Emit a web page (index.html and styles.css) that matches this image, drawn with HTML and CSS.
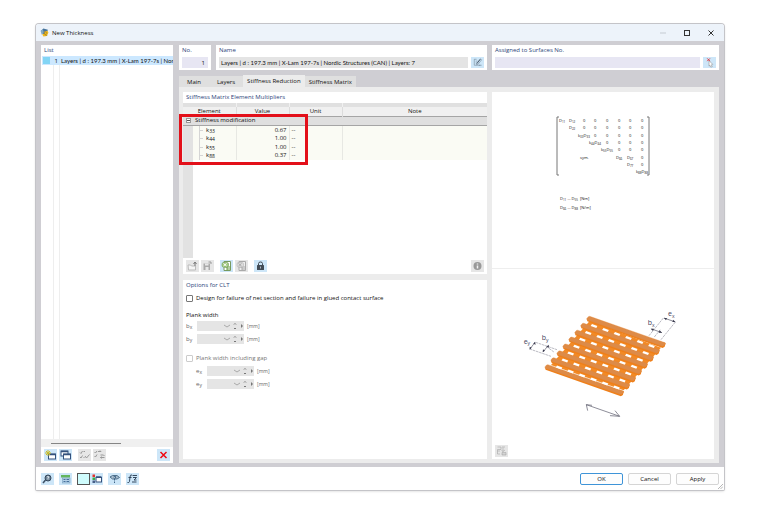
FILE: index.html
```html
<!DOCTYPE html>
<html lang="en">
<head>
<meta charset="utf-8">
<title>New Thickness</title>
<link rel="stylesheet" href="styles.css">
</head>
<body>
<div class="window">
  <header class="titlebar">
    <svg class="app-icon" viewBox="0 0 16 16"><path d="M2 5 6 1l8 2-2 6-7 2z" fill="#46739b"/><path d="M1 5l4-3 2 6-4 4z" fill="#83a9c4"/><path d="M8 6l5-1 2 3-3 6-6 1-2-4 3-1z" fill="#f1b91d"/><path d="M7 7l2 5 4 1M10 6l2 4" stroke="#70652e" fill="none"/></svg>
    <h1>New Thickness</h1>
    <div class="window-controls">
      <button class="plain" aria-label="Minimize" disabled><svg viewBox="0 0 8 8"><path d="M1 4h6" stroke="#c5cbd2"/></svg></button>
      <button class="plain" aria-label="Maximize"><svg viewBox="0 0 8 8"><rect x="1.500" y="1.500" width="5" height="5" fill="none" stroke="#333"/></svg></button>
      <button class="plain" aria-label="Close"><svg viewBox="0 0 8 8"><path d="M1.500 1.500l5 5M6.500 1.500l-5 5" stroke="#333"/></svg></button>
    </div>
  </header>

  <div class="content">
    <aside class="panel list">
      <h2>List</h2>
      <div class="list-body">
        <div class="list-row"><span class="swatch"></span><span class="row-no">1</span><span class="row-name">Layers | d : 197.3 mm | X-Lam 197-7s | Nordic Structures (CAN) | Layers: 7</span></div>
      </div>
      <div class="scroll"><div class="thumb"></div></div>
      <div class="tools">
        <button class="tool" aria-label="New"><svg viewBox="0 0 26 24"><rect x="9" y="10" width="14" height="10" fill="#fff" stroke="#34517c" stroke-width="2"/><path d="M9 11h14" stroke="#34517c" stroke-width="3"/><path d="M8 2v12M2 8h12M4 4l8 8M12 4l-8 8" stroke="#c9bd2c" stroke-width="2"/></svg></button>
        <button class="tool" aria-label="Copy"><svg viewBox="0 0 26 24"><g fill="#fff" stroke="#34517c" stroke-width="2"><rect x="4" y="4" width="14" height="10"/><rect x="9" y="10" width="14" height="10"/></g><path d="M4 5h14M9 11h14" stroke="#34517c" stroke-width="3"/></svg></button>
        <button class="tool off spaced" aria-label="Select all" disabled><svg viewBox="0 0 26 24"><path d="M4 7l2 2 3-5M4 16l2 2 3-5M11 5h3M11 17h2M14 14l3 4 6-7" fill="none" stroke="#999" stroke-width="2"/></svg></button>
        <button class="tool off" aria-label="Invert selection" disabled><svg viewBox="0 0 26 24"><path d="M3 6l2 2 3-4M3 14l2 2 3-5M10 5h6l-2-2M23 17h-8l2-2M15 17l2 2M15 12h6l2 2" fill="none" stroke="#999" stroke-width="2"/></svg></button>
        <button class="tool last" aria-label="Delete"><svg viewBox="0 0 26 24"><path d="M7 6l12 12M19 6L7 18" stroke="#f00812" stroke-width="3"/></svg></button>
      </div>
    </aside>

    <main class="main">
      <div class="top">
        <div class="left-top">
          <div class="panel field no"><label for="no">No.</label><input id="no" value="1"></div>
          <div class="panel field name"><label for="name">Name</label>
            <div class="field-line"><input id="name" value="Layers | d : 197.3 mm | X-Lam 197-7s | Nordic Structures (CAN) | Layers: 7" readonly>
            <button class="tool" aria-label="Edit name"><svg viewBox="0 0 26 24"><path d="M11 5H6v13h13M9 9h4M9 13h3M19 4l-7 9-1 4 4-2 7-9zM16 18h6" fill="none" stroke="#5d6e7f" stroke-width="1"/><path d="M19 5l-7 9" stroke="#46586b" stroke-width="2"/></svg></button></div></div>
        </div>
        <div class="panel field assigned"><label for="surfaces">Assigned to Surfaces No.</label>
          <div class="field-line"><input id="surfaces"><button class="tool" aria-label="Select surfaces"><svg viewBox="0 0 26 24"><path d="M12 8l8 8-3 1 2 4-3 1-2-4-2 2z" fill="#fff" stroke="#777"/><path d="M8 3l6 6M14 3L8 9" stroke="#e3343b" stroke-width="2"/></svg></button></div></div>
      </div>

      <div class="tabs" role="tablist">
        <button role="tab">Main</button><button role="tab">Layers</button><button role="tab" class="active" aria-selected="true">Stiffness Reduction</button><button role="tab">Stiffness Matrix</button>
      </div>

      <div class="tab-body">
        <div class="left-col">
          <section class="panel multipliers">
            <h2>Stiffness Matrix Element Multipliers</h2>
            <div class="table-area">
              <table>
                <colgroup><col class="c-head"><col class="c-element"><col class="c-value"><col class="c-unit"><col></colgroup>
                <thead>
                  <tr class="strip"><td colspan="2"></td><td></td><td></td><td></td></tr>
                  <tr><th colspan="2">Element</th><th>Value</th><th>Unit</th><th>Note</th></tr>
                </thead>
                <tbody>
                  <tr class="group"><td><svg viewBox="0 0 10 7"><rect x="3.500" y="1.500" width="4" height="4" fill="#fff" stroke="#999"/><path d="M4 3.500h3" stroke="#555"/></svg></td><td colspan="4">Stiffness modification</td></tr>
                  <tr><td></td><td class="el">k<sub>33</sub></td><td class="val">0.67</td><td>--</td><td></td></tr>
                  <tr><td></td><td class="el">k<sub>44</sub></td><td class="val">1.00</td><td>--</td><td></td></tr>
                  <tr><td></td><td class="el">k<sub>55</sub></td><td class="val">1.00</td><td>--</td><td></td></tr>
                  <tr><td></td><td class="el">k<sub>88</sub></td><td class="val">0.37</td><td>--</td><td></td></tr>
                </tbody>
              </table>
              <div class="highlight"></div>
            </div>
            <div class="tools">
              <button class="tool off" aria-label="Open" disabled><svg viewBox="0 0 26 24"><path d="M4 10h5l2 2h8v8H5z" fill="#f5f5f5" stroke="#bbb" stroke-width="2"/><path d="M18 12V5M15 8l3-4 3 4" fill="none" stroke="#777" stroke-width="2"/></svg></button>
              <button class="tool off" aria-label="Save" disabled><svg viewBox="0 0 26 24"><path d="M5 7h13v13H5z" fill="#aaa"/><path d="M8 7h7v4H8zM9 14h6v6H9z" fill="#e8e8e8"/><path d="M15 4h5v4" fill="none" stroke="#999" stroke-width="2"/></svg></button>
              <button class="tool spaced" aria-label="Export table"><svg viewBox="0 0 26 24"><path d="M8 3h13v18H8z" fill="#fff" stroke="#789a62" stroke-width="2"/><path d="M9 14h12M14 14v7M14 18h7" stroke="#6c9e4a" stroke-width="2"/><rect x="4" y="5" width="13" height="9" rx="3" fill="#a4cb85" stroke="#5c9140"/><path d="M7 7l6 5M13 7l-6 5" stroke="#fff" stroke-width="2"/></svg></button>
              <button class="tool off" aria-label="Import table" disabled><svg viewBox="0 0 26 24"><path d="M8 3h13v18H8z" fill="#eee" stroke="#aaa" stroke-width="2"/><path d="M9 14h12M14 14v7M14 18h7" stroke="#aaa" stroke-width="2"/><rect x="4" y="5" width="13" height="9" rx="3" fill="#ddd" stroke="#aaa"/><path d="M7 7l6 5M13 7l-6 5" stroke="#aaa" stroke-width="2"/></svg></button>
              <button class="tool spaced" aria-label="Lock"><svg viewBox="0 0 26 24"><rect x="6" y="10" width="14" height="10" rx="1" fill="#424c56"/><path d="M9 11V7q0-3 4-3t4 3v4" fill="none" stroke="#424c56" stroke-width="2"/><path d="M13 13v4" stroke="#aebbc7" stroke-width="2"/></svg></button>
              <button class="tool off last" aria-label="Information" disabled><svg viewBox="0 0 26 24"><circle cx="13" cy="12" r="8" fill="#999"/><path d="M13 11v6M13 7v2" stroke="#f2f2f2" stroke-width="3"/></svg></button>
            </div>
          </section>

          <section class="panel options">
            <h2>Options for CLT</h2>
            <div class="check"><input type="checkbox" id="design"><label for="design">Design for failure of net section and failure in glued contact surface</label></div>
            <h3>Plank width</h3>
            <div class="spin"><label for="bx">b<sub>x</sub></label><span class="spin-box"><input id="bx" disabled><svg viewBox="0 0 24 10"><path d="M5 4l3 2 3-2" class="ghost"/><path d="M15 3.500l1-1 1 1M15 7l1 1 1-1" class="dark"/><path d="M22 3v4l2-2z" class="tri"/></svg></span><span class="unit">[mm]</span></div>
            <div class="spin"><label for="by">b<sub>y</sub></label><span class="spin-box"><input id="by" disabled><svg viewBox="0 0 24 10"><path d="M5 4l3 2 3-2" class="ghost"/><path d="M15 3.500l1-1 1 1M15 7l1 1 1-1" class="dark"/><path d="M22 3v4l2-2z" class="tri"/></svg></span><span class="unit">[mm]</span></div>
            <div class="check muted"><input type="checkbox" id="gap" disabled><label for="gap">Plank width including gap</label></div>
            <div class="spin inset"><label for="ex">e<sub>x</sub></label><span class="spin-box"><input id="ex" disabled><svg viewBox="0 0 24 10"><path d="M5 4l3 2 3-2" class="ghost"/><path d="M15 3.500l1-1 1 1M15 7l1 1 1-1" class="dark"/><path d="M22 3v4l2-2z" class="tri"/></svg></span><span class="unit">[mm]</span></div>
            <div class="spin inset"><label for="ey">e<sub>y</sub></label><span class="spin-box"><input id="ey" disabled><svg viewBox="0 0 24 10"><path d="M5 4l3 2 3-2" class="ghost"/><path d="M15 3.500l1-1 1 1M15 7l1 1 1-1" class="dark"/><path d="M22 3v4l2-2z" class="tri"/></svg></span><span class="unit">[mm]</span></div>
          </section>
        </div>

        <section class="panel preview">
          <svg class="matrix" viewBox="492 92 222 176">
            <path d="M559 117h-2v58h2M647 117h2v58h-2" fill="none" stroke="#777" stroke-width="1"/>
            <g id="cells"></g>
            <g class="units">
              <text x="560" y="200">D<tspan class="s" dy="1">11</tspan><tspan dy="-1"> ... D</tspan><tspan class="s" dy="1">55</tspan><tspan dy="-1">&#160; [Nm]</tspan></text>
              <text x="560" y="209">D<tspan class="s" dy="1">66</tspan><tspan dy="-1"> ... D</tspan><tspan class="s" dy="1">88</tspan><tspan dy="-1">&#160; [N/m]</tspan></text>
            </g>
          </svg>
          <svg class="planks" viewBox="492 269 222 172">
            <g transform="translate(515 300) scale(.3333)">
              <path d="M224 60L438 140 326 268 108 192z" fill="#f28a26"/>
              <g id="holes"></g>
              <g id="boards"></g>
              <g class="dims">
                <path d="M402 104L446 50M418 108L436 86M438 116L482 62" class="dash"/>
                <path d="M62 124L126 146M94 136L118 154M44 144L108 166" class="dash"/>
                <path d="M447 51l34 12M410 84l31 11M60 124l-15 20M99 134l-14 18"/>
                <path d="M447 51l9 0-3 7zM481 63l-9 0 3-7zM407 83l10 0-3 7zM441 95l-10 0 3-7zM60 122l2 9-7-3zM44 146l0-9 6 3zM101 131l1 9-7-3zM83 154l1-9 6 4z" class="head"/>
                <path d="M231 313l-17-2 4 18M214 311l100 35M285 344l29 2-14-17"/>
              </g>
              <g class="dim-text">
                <text x="398" y="72">b<tspan class="ds" dy="5">x</tspan></text>
                <text x="459" y="46">e<tspan class="ds" dy="5">x</tspan></text>
                <text x="80" y="118">b<tspan class="ds" dy="5">y</tspan></text>
                <text x="26" y="128">e<tspan class="ds" dy="5">y</tspan></text>
              </g>
            </g>
          </svg>
          <div class="tools"><button class="tool off" aria-label="Picture settings" disabled><svg viewBox="0 0 26 24"><path d="M5 4h7v5H5v9h5M5 12h5M14 4h6M16 5v8l-3-2M16 13l4-3M14 15h8v5h-8zM14 18h8" fill="none" stroke="#999" stroke-width="1"/></svg></button></div>
        </section>
      </div>
    </main>
  </div>

  <footer class="footer">
    <button class="tool" aria-label="Help"><svg viewBox="0 0 26 24"><path d="M9 14l-5 6" stroke="#3c5066" stroke-width="3"/><circle cx="14" cy="10" r="6" fill="#6f8496" stroke="#34475c" stroke-width="2"/><path d="M12 8q2-2 4 0l-2 3v2" fill="none" stroke="#dfeaf2" stroke-width="2"/></svg></button>
    <button class="tool" aria-label="Units"><svg viewBox="0 0 26 24"><path d="M4 4h18v5H4z" fill="#63b65f"/><rect x="7" y="10" width="15" height="10" fill="#b5d1e8" stroke="#6a94b5"/><path d="M9 13h4M15 13h5M9 17h4M15 17h5" stroke="#47709b" stroke-width="2"/></svg></button>
    <span class="pair"><button class="colour" aria-label="Colour"></button><button class="tool" aria-label="Display colours"><svg viewBox="0 0 26 24"><path d="M5 3h5v5H5z" fill="#e4322f"/><path d="M5 9h5v5H5z" fill="#3cad47"/><path d="M5 15h5v5H5z" fill="#465f88"/><rect x="12" y="9" width="11" height="9" fill="#fff" stroke="#34517c" stroke-width="2"/><path d="M12 8h11" stroke="#34517c" stroke-width="3"/></svg></button></span>
    <button class="tool" aria-label="View"><svg viewBox="0 0 26 24"><path d="M4 8l5-3h9l5 4-5 3H9z" fill="#a7bccd" stroke="#50718d" stroke-width="2"/><path d="M11 8q3-3 5 0l-3 4v3M13 17v3" fill="none" stroke="#3f6486" stroke-width="2"/></svg></button>
    <button class="tool" aria-label="Formula"><svg viewBox="0 0 26 24"><path d="M12 4q-4-1-4 4l-1 9q-1 3-4 2M5 9h6M13 5h9M14 9h7l-5 5h5M12 18h9" fill="none" stroke="#34495f" stroke-width="2"/></svg></button>
    <div class="actions"><button class="action ok">OK</button><button class="action">Cancel</button><button class="action">Apply</button></div>
    <svg class="grip" viewBox="0 0 6 6"><path d="M0 6l6-6M3 6l3-3" stroke="#aaa" stroke-width="1"/></svg>
  </footer>
</div>
<script src="drawing.js"></script>
</body>
</html>
```
FILE: styles.css
```css
* { box-sizing: border-box; }
body {
  margin: 0;
  min-height: 100vh;
  padding: 24px 36px 25px;
  display: flex;
  background: #fff;
  color: #111;
  font: 6px/8px "Open Sans", "Noto Sans", sans-serif;
}
button, input { font: inherit; color: inherit; margin: 0; padding: 0; border: 0; border-radius: 0; }
svg { display: block; }
h1, h2, h3 { margin: 0; font: inherit; }
sub { font-size: 5px; line-height: 0; vertical-align: -1px; }

.window {
  position: relative;
  flex: 1;
  display: flex;
  flex-direction: column;
  border-radius: 3px 3px 1px 1px;
  background: #fff;
  box-shadow: 0 0 0 1px #c4c4c8, 0 1px 3px #0003;
  overflow: hidden;
}
.titlebar { display: flex; align-items: center; height: 17px; padding: 0 9px 0 4px; background: #edf3fa; }
.titlebar h1 { padding-left: 3px; }
.app-icon { width: 9px; height: 9px; }
.window-controls { display: flex; margin-left: auto; gap: 16px; }
.plain { width: 8px; height: 8px; background: none; }
.plain svg { width: 8px; height: 8px; }

.content { flex: 1; display: flex; gap: 6px; padding: 4px 5px; background: #cfced3; }
.panel { background: #fff; }
h2, .field label { color: #2c4479; }

.list { flex: 0 0 132px; min-width: 0; display: flex; flex-direction: column; }
.list h2 { padding: 1px 3px 2px; }
.list-body { flex: 1; padding-left: 1px; background: linear-gradient(90deg, #fff 12px, #eee 12px 13px, #fff 13px 18px, #eee 18px 19px, #fff 19px); }
.list-row { display: flex; align-items: center; height: 9px; background: #cce8ff; white-space: nowrap; overflow: hidden; }
.swatch { flex: none; width: 7px; height: 7px; margin-left: 1px; background: #83d5f5; }
.row-no { flex: none; width: 8px; text-align: right; }
.row-name { padding-left: 3px; overflow: hidden; }
.row-name, #name { font-family: Lato, "Open Sans", sans-serif; }
.scroll { display: flex; align-items: center; height: 8px; padding: 0 10px; background: #f0f0f0; }
.thumb { width: 70px; height: 1px; background: #858585; }

.tools { display: flex; gap: 2px; padding: 2px 3px; }
.tool { flex: none; width: 13px; height: 12px; background: #cde6f8; }
.tool svg { width: 13px; height: 12px; }
.off { background: #e6e6e6; }
.spaced { margin-left: 4px; }
.last { margin-left: auto; }

.main { flex: 1; min-width: 0; display: flex; flex-direction: column; }
.top { display: grid; grid-template-columns: 308fr 227fr; gap: 5px; }
.left-top { display: flex; gap: 5px; min-width: 0; }
.field { display: flex; flex-direction: column; gap: 3px; min-width: 0; padding: 1px 3px 2px; }
.field input { flex: 1; width: 100%; min-width: 0; height: 11px; background: #e7e6f3; }
.no { width: 32px; }
.no input { flex: none; padding-right: 3px; text-align: right; }
.name { flex: 1; }
.field.name input { padding-left: 2px; background: #e4e4e4; }
.field-line { display: flex; gap: 3px; }
.field-line .tool { height: 11px; }
.field-line .tool svg { height: 11px; }

.tabs { display: flex; align-items: flex-end; height: 12px; margin-top: 5px; }
.tabs button { height: 11px; padding: 0 8px; background: #dfdfdf; }
.tabs .active { height: 12px; padding: 0 4px; background: #ececec; }
.tabs .active + button { padding: 0 4px; }

.tab-body { flex: 1; display: grid; grid-template-columns: 304fr 222fr; gap: 5px; padding: 5px 5px 4px 4px; background: #ececec; }
.left-col { display: flex; flex-direction: column; gap: 6px; min-width: 0; }
.multipliers { display: flex; flex-direction: column; }
.multipliers h2, .options h2 { padding: 1px 3px; }
.table-area { position: relative; height: 155px; background: linear-gradient(90deg, #e2e2e2 10px, #fff 10px); }
.multipliers h2 { padding-bottom: 2px; }
table { width: 100%; table-layout: fixed; border-collapse: collapse; background: #fafbf4; }
.c-head { width: 10px; }
.c-element { width: 43px; }
.c-value, .c-unit { width: 53px; }
td, th { height: 8px; padding: 0 2px; border-right: 1px solid #e7e8e3; line-height: 8px; font-weight: 400; }
tr > :last-child { border-right: 0; }
tbody tr:nth-child(odd) td { height: 9px; }
tbody td:first-child { padding: 0; background: #e2e2e2; border: 0; }
thead { background: #f0f0f0; }
thead .strip td { height: 4px; line-height: 3px; background: #e0e0e0; border-color: #f0f0f0; }
thead th { height: 9px; border-color: #dcdcdc; }
tbody .group td { background: #dfdfdf; border: solid #a5a5a5; border-width: 1px 0; line-height: 7px; }
.group svg { width: 10px; height: 7px; }
tbody .el { padding-left: 13px; background: linear-gradient(90deg, #d5d5d5 4px, #0000 4px) 6px 4px / 4px 1px no-repeat, linear-gradient(#d5d5d5, #d5d5d5) 6px 0 / 1px 100% no-repeat; }
.val { text-align: right; }
.highlight { position: absolute; left: -4px; top: 11px; width: 129px; height: 51px; border: 3px solid #e3101a; }

.options { flex: 1; }
.check { display: flex; align-items: center; gap: 3px; height: 8px; margin: 4px 4px 9px 3px; }
.check input { flex: none; appearance: none; width: 7px; height: 7px; border: 1px solid #777; border-radius: 1px; background: #fff; }
.muted { color: #777; margin-top: 10px; margin-bottom: 4px; }
.muted input { border-color: #ccc; }
.options h3 { padding: 0 3px; margin-bottom: 2px; }
.spin { display: flex; align-items: center; height: 10px; margin: 0 3px 3px; color: #666; }
.spin label { width: 11px; }
.unit { font-size: 5px; }
.inset { padding-left: 10px; }
.spin-box { display: flex; width: 47px; height: 10px; margin-right: 3px; background: #e5e5e5; }
.spin-box input { width: 22px; background: none; }
.spin-box svg { width: 24px; height: 10px; }
.ghost, .dark { fill: none; stroke: #aaa; }
.dark { stroke: #777; }
.tri { fill: #777; }

.preview { display: flex; flex-direction: column; min-width: 0; }
.matrix { width: 100%; border-bottom: 1px solid #eee; }
.planks { width: 100%; flex: 1; }
.matrix text { font: 4px "Open Sans", sans-serif; fill: #111; white-space: pre; }
.matrix .s { font-size: 3px; }
.dims path { fill: none; stroke: #555565; stroke-width: 2; }
.dims .dash { stroke: #9999a5; stroke-dasharray: 8 2; }
.dims .head { fill: #3c3c50; stroke: none; }
.dim-text text { font: 21px "Open Sans", sans-serif; fill: #44445c; }
.dim-text .ds { font-size: 15px; }
.board { fill: #dd8b48; stroke: #e68632; stroke-width: 1; stroke-linejoin: round; }
.board-side { fill: #f07f17; }
.hole { fill: #fff; }

.footer { display: flex; align-items: center; gap: 5px; height: 23px; padding: 0 5px; background: #fff; }
.pair { display: flex; }
.colour { width: 13px; height: 12px; background: #cffcfd; border: 1px solid #555; }
.actions { display: flex; gap: 5px; margin-left: auto; }
.action { width: 43px; height: 12px; border: 1px solid #d5d5d5; border-radius: 2px; background: #fdfdfd; }
.ok { border-color: #3e94d8; }
.grip { position: absolute; right: 1px; bottom: 1px; width: 5px; height: 5px; }
```
FILE: drawing.js
```js
const NS = "http://www.w3.org/2000/svg";
function add(parent, tag, attrs) {
  const node = document.createElementNS(NS, tag);
  for (const key in attrs) node.setAttribute(key, attrs[key]);
  parent.append(node);
  return node;
}

// Stiffness matrix: upper triangle, "_" starts a subscript.
const columns = [559, 569, 583, 594, 606, 618, 629, 641];
const rows = [
  [[0, "D_11"], [1, "D_12"], [2, "0"], [3, "0"], [4, "0"], [5, "0"], [6, "0"], [7, "0"]],
  [[1, "D_22"], [2, "0"], [3, "0"], [4, "0"], [5, "0"], [6, "0"], [7, "0"]],
  [[2, "k_33D_33", -5], [3, "0"], [4, "0"], [5, "0"], [6, "0"], [7, "0"]],
  [[3, "k_44D_44", -5], [4, "0"], [5, "0"], [6, "0"], [7, "0"]],
  [[4, "k_55D_55", -5], [5, "0"], [6, "0"], [7, "0"]],
  [[2, "sym.", -3], [5, "D_66", -2], [6, "D_67", -2], [7, "0"]],
  [[6, "D_77", -2], [7, "0"]],
  [[7, "k_88D_88", -5]]
];
const cells = document.getElementById("cells");
rows.forEach((row, r) => row.forEach(([c, label, shift = 0]) => {
  const text = add(cells, "text", { x: columns[c] + shift, y: 122 + Math.round(r * 7.3) });
  label.split(/(_\d\d)/).filter(Boolean).forEach((part, i) => {
    const sub = part[0] === "_";
    const span = add(text, "tspan", sub ? { class: "s", dy: 1 } : { dy: i ? -1 : 0 });
    span.textContent = sub ? part.slice(1) : part;
  });
}));

// Plank grid: eight long boards with six openings in each gap.
const boards = document.getElementById("boards");
for (let r = 0; r < 8; r++) {
  const x = 220 - r * 17.9, y = 47 + r * 20.7;
  add(boards, "path", { class: "board-side", d: `M${x - 4} ${y + 8}l1 6 226 80 6-4 3-11z` });
  add(boards, "path", { class: "board", d: `M${x} ${y}l4-1 226 79 1 4-5 6-4 1-226-79-1-4z` });
}
for (let r = 0; r < 7; r++) {
  for (let c = 0; c < 6; c++) {
    const x = 237 - r * 17.5 + c * 34.5, y = 75 + r * 20.7 + c * 12;
    add(boards, "path", { class: "hole", d: `M${x - 6} ${y - 6}l16 6-3 6-17-6z` });
  }
}
```
